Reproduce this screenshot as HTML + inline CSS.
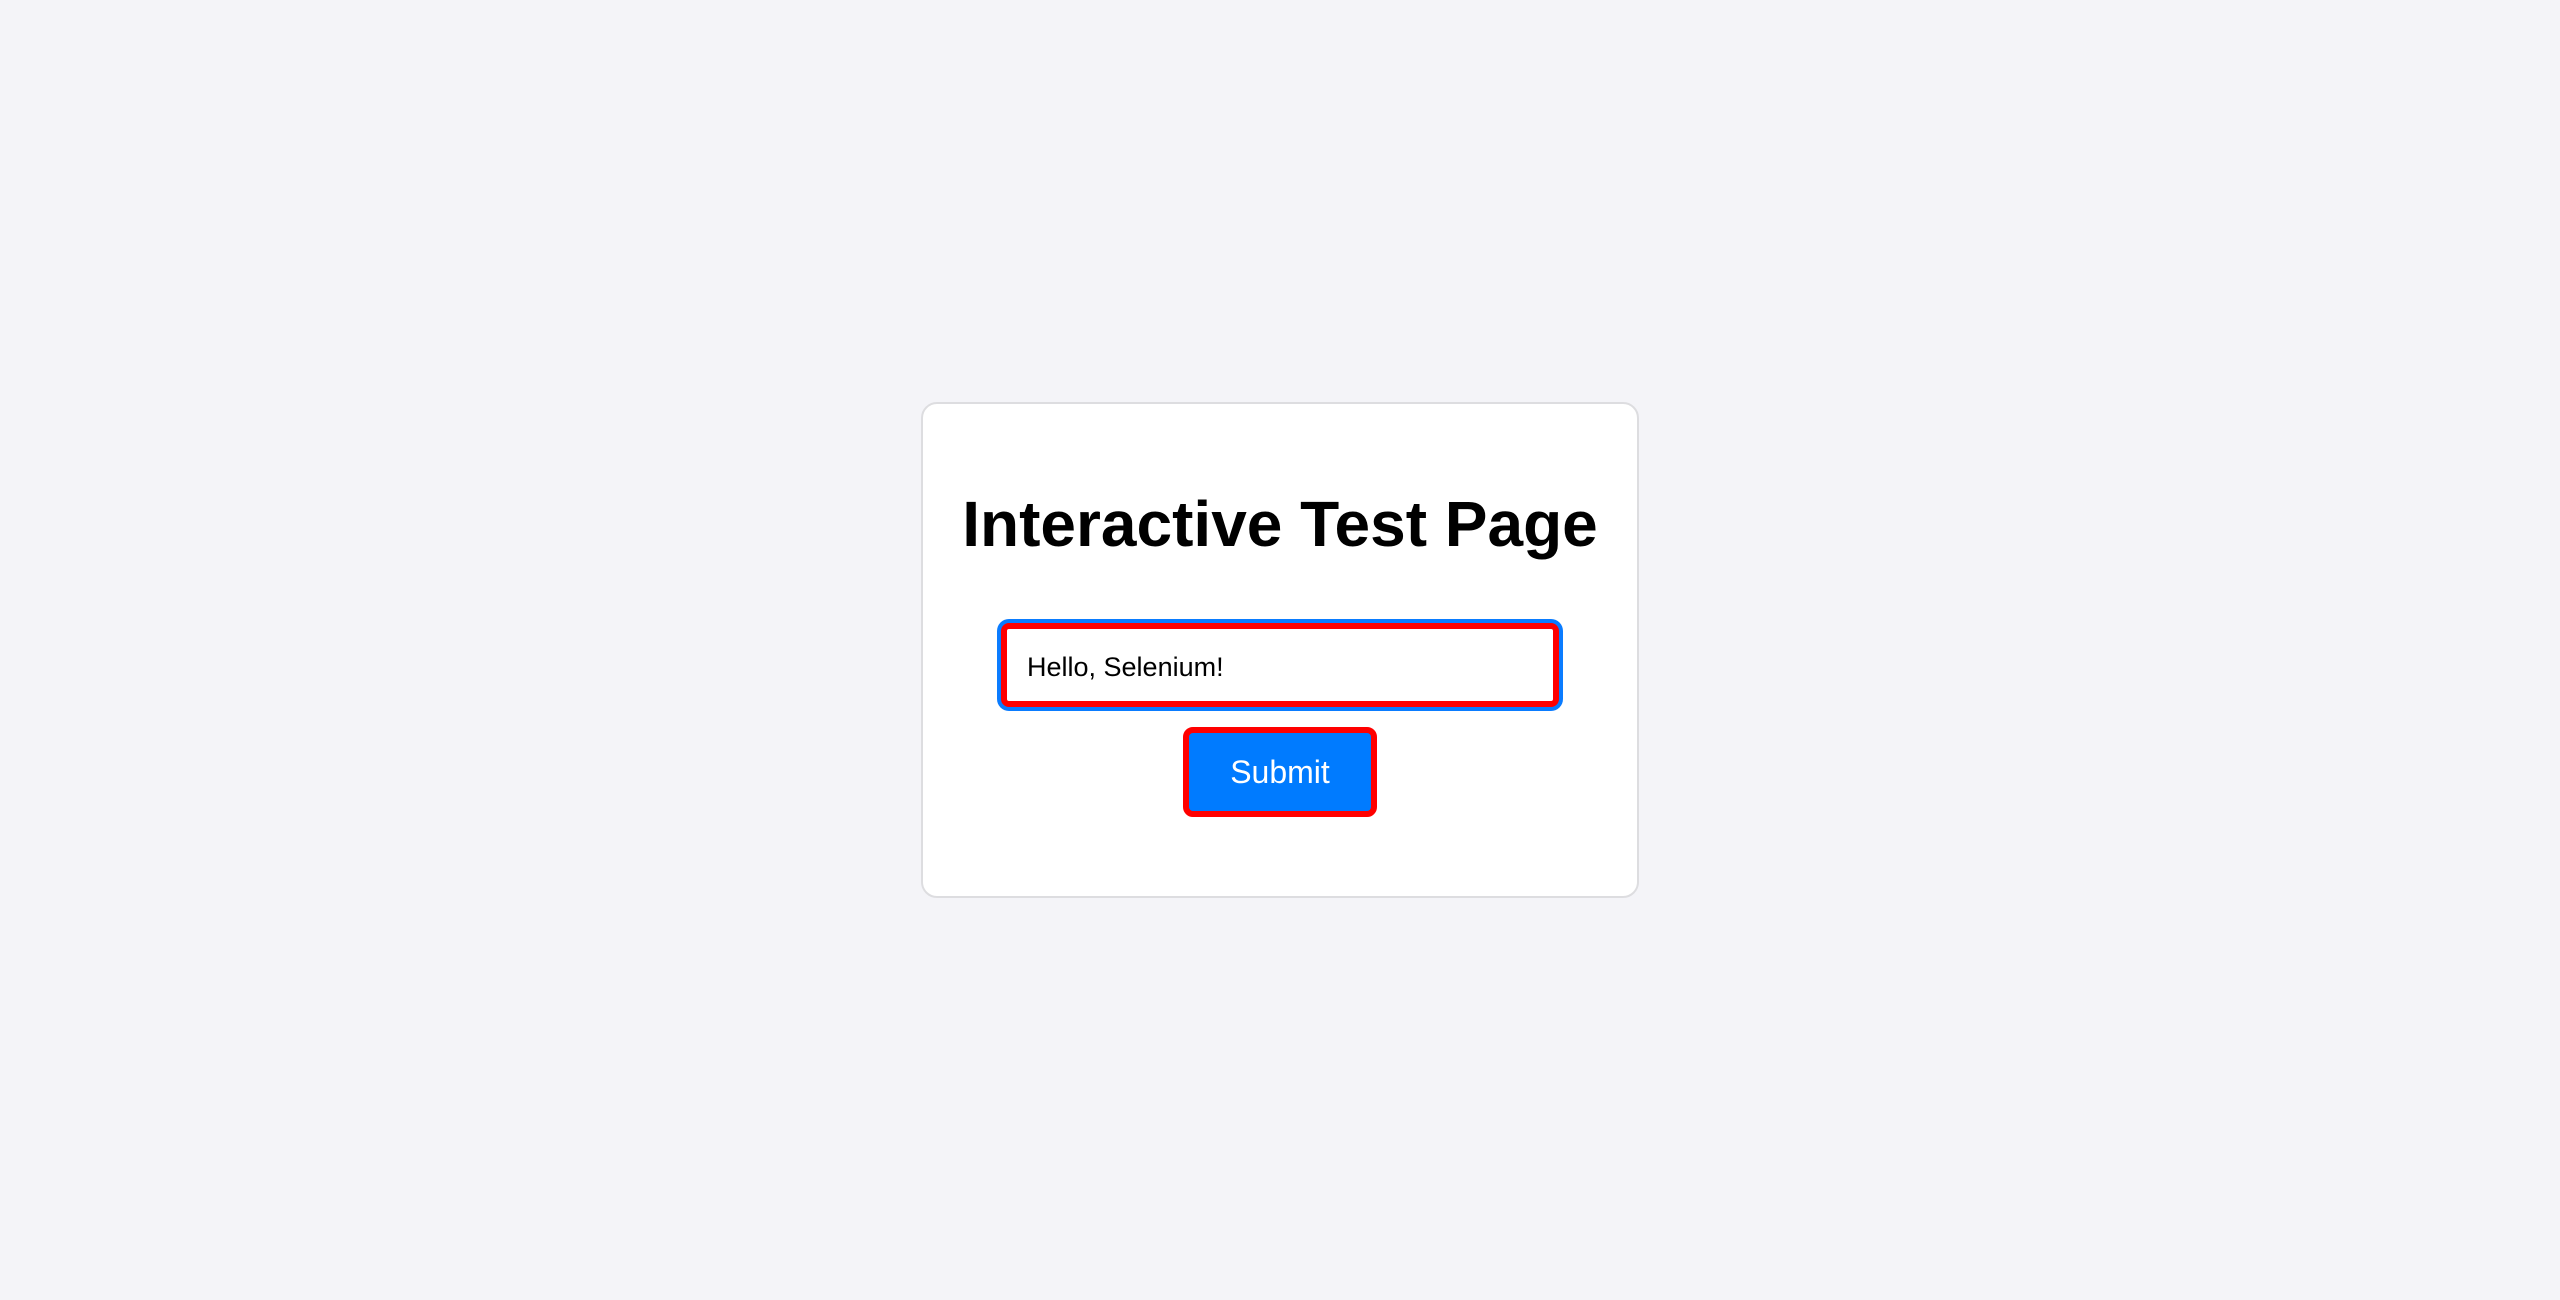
<!DOCTYPE html>
<html><head><meta charset="utf-8"><style>
html,body{margin:0;padding:0;width:2560px;height:1300px;background:#f4f4f8;overflow:hidden;font-family:"Liberation Sans",Arial,sans-serif}
.card{position:absolute;left:921px;top:402px;width:714px;height:492px;background:#fff;border:2px solid #dddde0;border-radius:16px}
h1{position:absolute;left:0;right:0;margin:0;text-align:center;font-size:64px;font-weight:bold;line-height:64px;color:#000;top:88px}
.inp{position:absolute;left:997px;top:619px;width:566px;height:92px;box-sizing:border-box;background:#0a7cff;border-radius:12px}
.inp2{position:absolute;left:4px;top:4px;right:4px;bottom:4px;background:#fff;border:6px solid #ff0000;border-radius:8px;box-sizing:border-box}
.inp2 span{position:absolute;left:20px;top:22px;font-size:27px;line-height:32px;color:#000}
.btn{position:absolute;left:1183px;top:727px;width:194px;height:90px;box-sizing:border-box;background:#007bff;border:6px solid #ff0000;border-radius:10px;color:#fff;font-size:32px;text-align:center;line-height:78px}
</style></head><body>
<div class="card"><h1>Interactive Test Page</h1></div>
<div class="inp"><div class="inp2"><span>Hello, Selenium!</span></div></div>
<div class="btn">Submit</div>
</body></html>
